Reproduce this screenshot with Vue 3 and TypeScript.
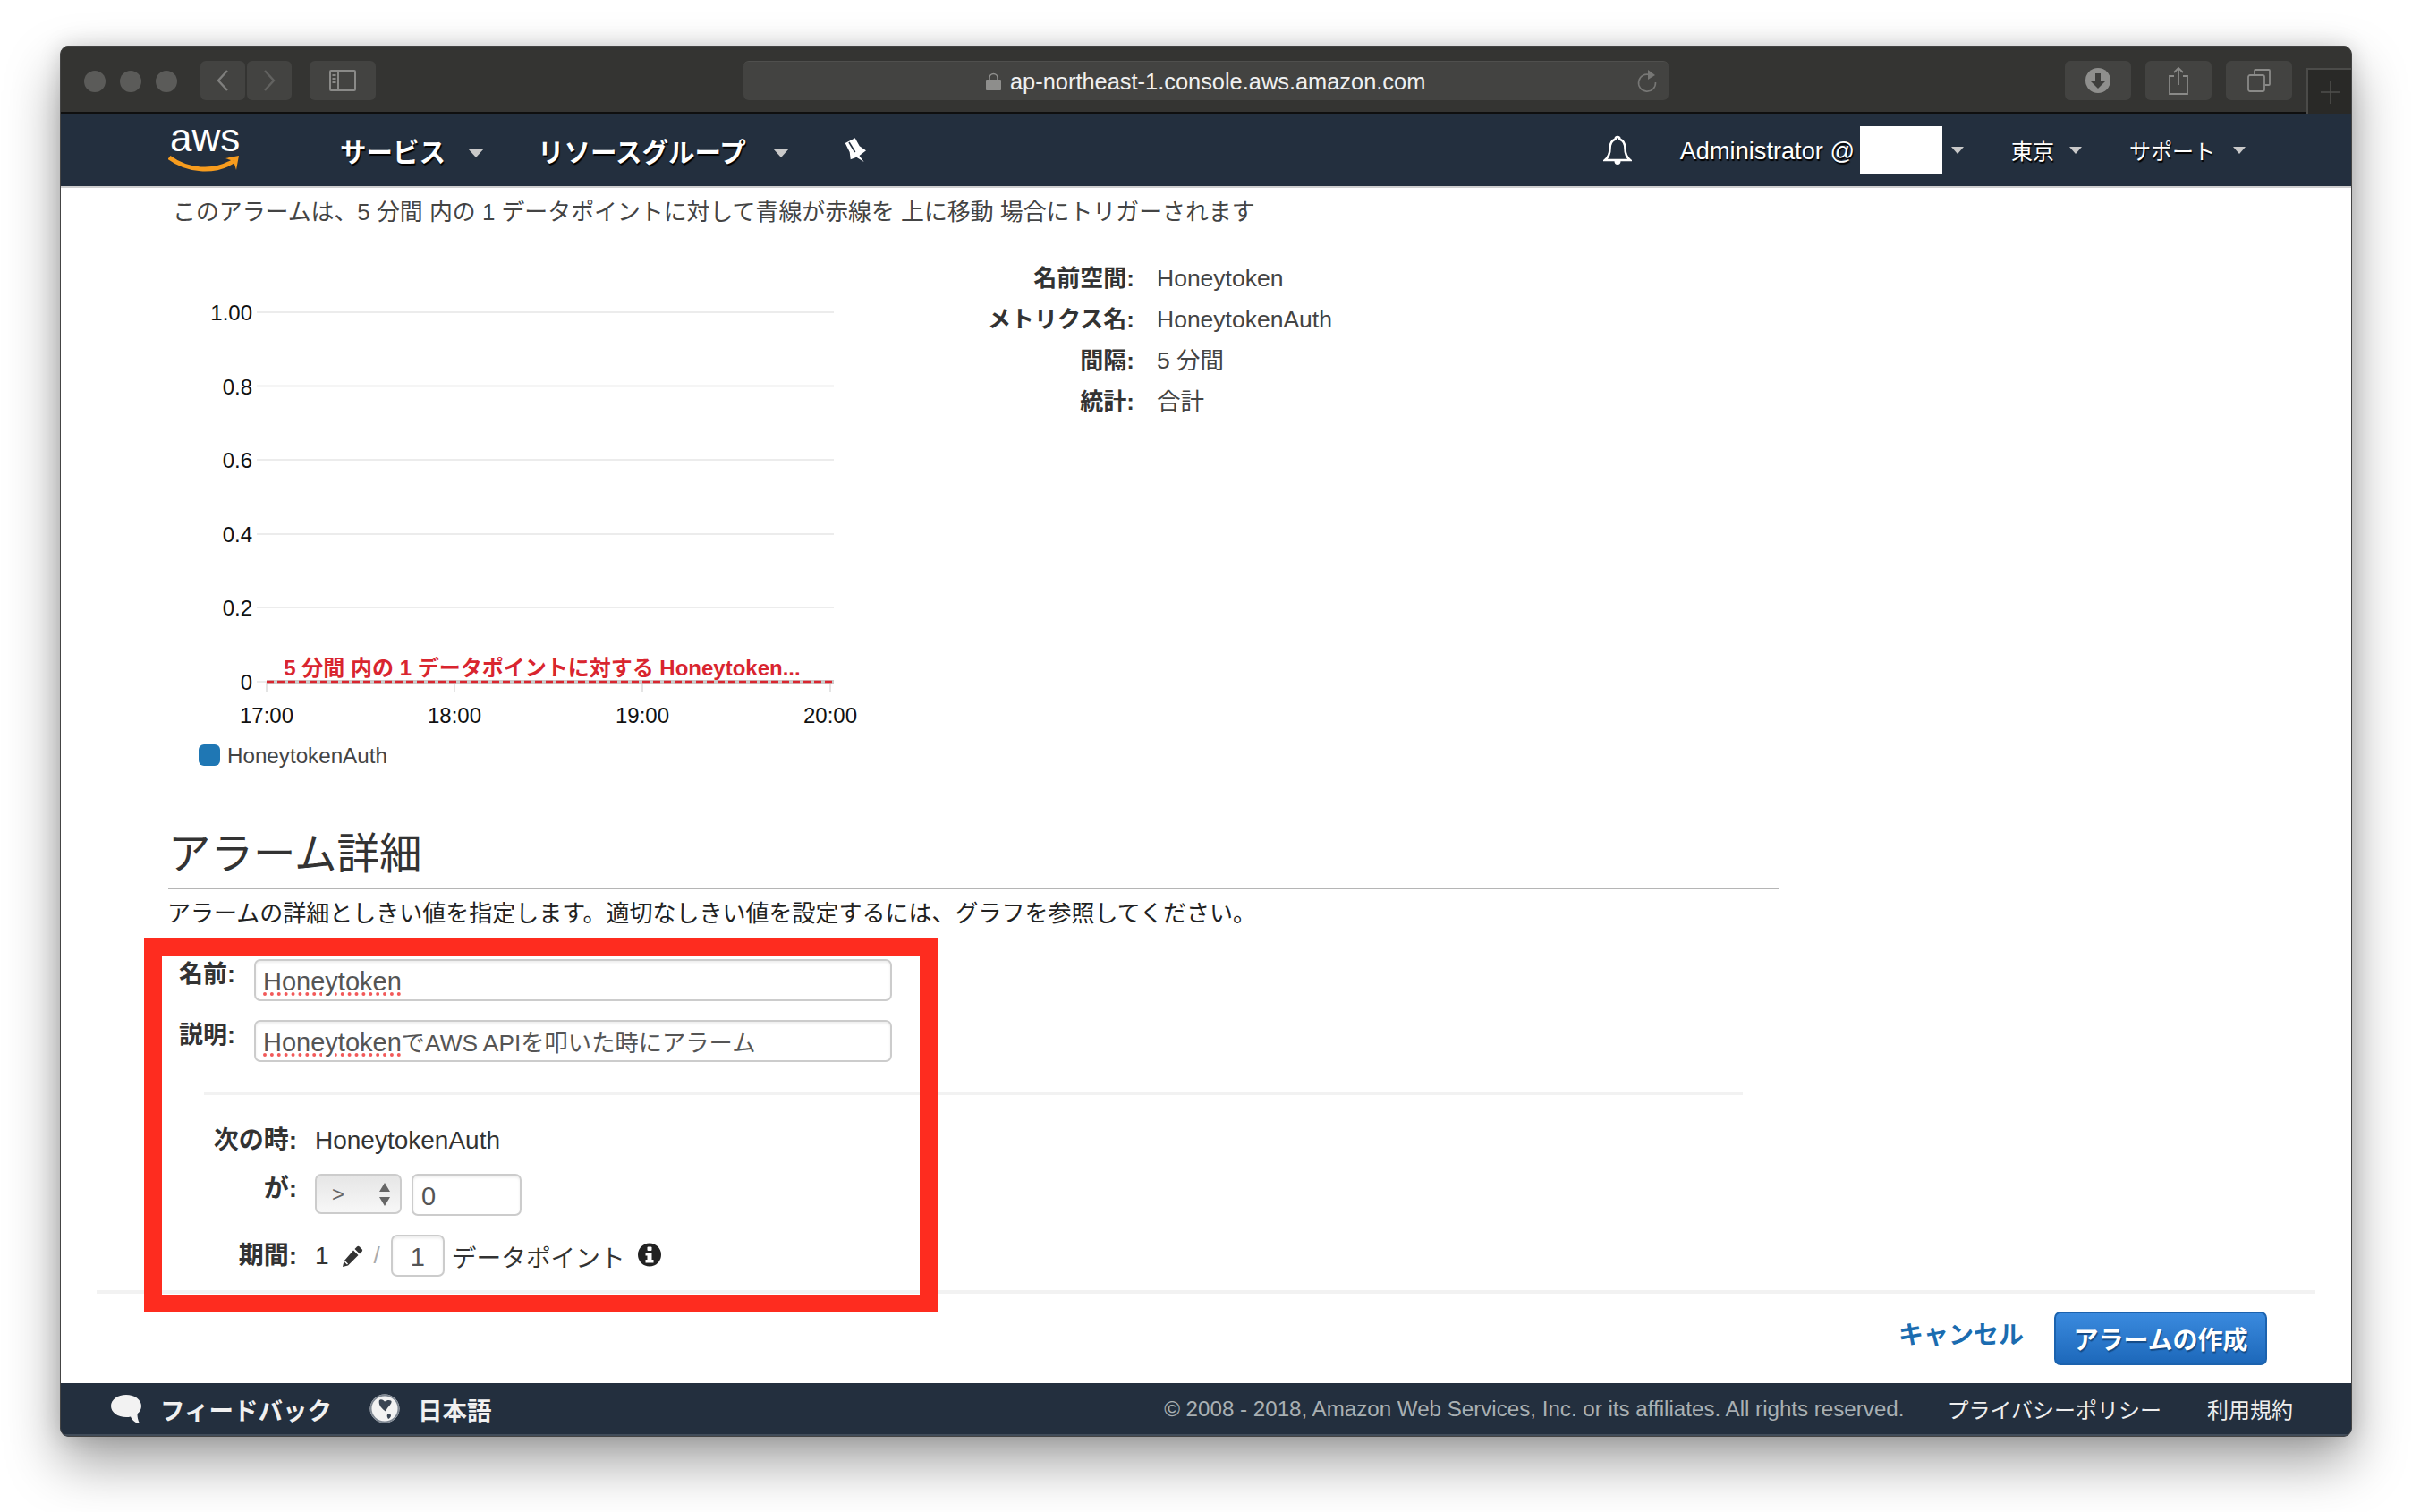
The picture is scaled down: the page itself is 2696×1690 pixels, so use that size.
<script setup lang="ts">
const yTicks = [
  { label: '1.00', y: 87 },
  { label: '0.8', y: 169.6 },
  { label: '0.6', y: 252 },
  { label: '0.4', y: 335 },
  { label: '0.2', y: 417 },
  { label: '0', y: 500 },
];
const xTicks = [
  { label: '17:00', x: 108 },
  { label: '18:00', x: 318 },
  { label: '19:00', x: 528 },
  { label: '20:00', x: 738 },
];
const meta = [
  ['名前空間:', 'Honeytoken'],
  ['メトリクス名:', 'HoneytokenAuth'],
  ['間隔:', '5 分間'],
  ['統計:', '合計'],
];
</script>

<template>
  <div class="stage">
    <div class="window">
      <div class="titlebar">
        <div class="lights"><i></i><i></i><i></i></div>
        <div class="tool nav-back">
          <svg width="16" height="26" viewBox="0 0 16 26"><path d="M13 2 3 13l10 11" fill="none" stroke="#7f7f7d" stroke-width="2.4" /></svg>
        </div>
        <div class="tool nav-forward">
          <svg width="16" height="26" viewBox="0 0 16 26"><path d="m3 2 10 11L3 24" fill="none" stroke="#626260" stroke-width="2.4" /></svg>
        </div>
        <div class="tool sidebar-btn">
          <svg width="30" height="24" viewBox="0 0 30 24">
            <rect x="1" y="1" width="28" height="22" rx="1" fill="none" stroke="#8a8a88" stroke-width="2" />
            <path d="M10 1v22" stroke="#8a8a88" stroke-width="2" />
            <path d="M3.5 6h4M3.5 10h4M3.5 14h4" stroke="#8a8a88" stroke-width="2" />
          </svg>
        </div>
        <div class="url">
          <svg class="lock" width="17" height="20" viewBox="0 0 17 20">
            <path d="M4 9V6a4.500 4.500 0 0 1 9 0v3" fill="none" stroke="#8e8e8c" stroke-width="1.600" />
            <rect y="8" width="17" height="12" rx="1" fill="#8e8e8c" />
          </svg>
          <span class="url-text">ap-northeast-1.console.aws.amazon.com</span>
          <svg class="reload" width="24" height="28" viewBox="0 0 24 28">
            <path d="M15 6.600A9.500 9.500 0 1 0 21.500 15" fill="none" stroke="#777775" stroke-width="1.600" />
            <path d="m13 1 8 6-8 5z" fill="#777775" />
          </svg>
        </div>
        <div class="tool download">
          <svg width="28" height="28" viewBox="0 0 28 28">
            <circle cx="14" cy="14" r="14" fill="#8f8f8d" />
            <path d="M11 6h6v9h5l-8 8-8-8h5z" fill="#3f3f3d" />
          </svg>
        </div>
        <div class="tool share">
          <svg width="24" height="32" viewBox="0 0 24 32">
            <path d="M7 11H2v20h20V11h-5" fill="none" stroke="#8a8a88" stroke-width="1.800" />
            <path d="M12 21V2M7 7l5-5 5 5" fill="none" stroke="#8a8a88" stroke-width="1.800" />
          </svg>
        </div>
        <div class="tool tabs">
          <svg width="26" height="26" viewBox="0 0 26 26">
            <path d="M8 6V2a1 1 0 0 1 1-1h15a1 1 0 0 1 1 1v15a1 1 0 0 1-1 1h-4" fill="none" stroke="#8a8a88" stroke-width="1.800" />
            <rect x="1" y="7" width="18" height="18" rx="2" fill="none" stroke="#8a8a88" stroke-width="1.800" />
          </svg>
        </div>
        <div class="newtab">
          <svg width="22" height="26" viewBox="0 0 22 26"><path d="M11 0v26M0 13h22" stroke="#4f4f4d" stroke-width="1.600" /></svg>
        </div>
      </div>

      <div class="topnav">
        <svg class="logo" width="82" height="66" viewBox="0 0 82 66">
          <text class="logo-text" x="2" y="40">aws</text>
          <path d="M1 47c20 15 50 18 72 4" fill="none" stroke="#f79c1e" stroke-width="5" />
          <path d="m64 48 15-3-3 16-3-10z" fill="#f79c1e" />
        </svg>
        <span class="nav-main services">サービス</span>
        <i class="caret c1"></i>
        <span class="nav-main groups">リソースグループ</span>
        <i class="caret c2"></i>
        <svg class="pin" width="28" height="30" viewBox="0 0 28 30">
          <path d="M1.700 7 12.700 1.300 17.700 10.300 25 15.300 17.500 21 22.700 28 14.300 22.700 7.700 25.300 6.700 17z" fill="#fff" />
          <path d="m6 6 6.700 11" stroke="#232f3e" stroke-width="1.600" />
        </svg>
        <svg class="bell" width="32" height="34" viewBox="0 0 32 34">
          <path d="M16 2c1.600 0 2.400 1 2.400 2.400C23 6 24.500 9.500 24.500 15c0 6 2 10 5.500 13H2c3.500-3 5.500-7 5.500-13 0-5.500 1.500-9 6.100-10.600C13.600 3 14.400 2 16 2Z" fill="none" stroke="#fff" stroke-width="2.600" />
          <path d="M12.500 29a3.500 4 0 0 0 7 0z" fill="#fff" />
        </svg>
        <span class="nav-sub admin">Administrator @</span>
        <span class="mask"></span>
        <i class="caret small c3"></i>
        <span class="nav-sub region">東京</span>
        <i class="caret small c4"></i>
        <span class="nav-sub support">サポート</span>
        <i class="caret small c5"></i>
      </div>

      <div class="content">
        <p class="summary">このアラームは、5 分間 内の 1 データポイントに対して青線が赤線を 上に移動 場合にトリガーされます</p>

        <div class="chart-row">
          <svg class="chart" width="810" height="618" viewBox="0 0 810 618">
            <g v-for="t in yTicks" :key="t.label">
              <line x1="97" x2="742" :y1="t.y" :y2="t.y" stroke="#ececec" stroke-width="2" />
              <text class="axis" x="92" :y="t.y + 9" text-anchor="end">{{ t.label }}</text>
            </g>
            <g v-for="t in xTicks" :key="t.label">
              <line :x1="t.x" :x2="t.x" y1="500" y2="511" stroke="#e4e4e4" stroke-width="2" />
              <text class="axis" :x="t.x" y="546" text-anchor="middle">{{ t.label }}</text>
            </g>
            <line x1="108" x2="742" y1="500" y2="500" stroke="#cccccc" stroke-width="4" />
            <line x1="108" x2="742" y1="500" y2="500" stroke="#d9252f" stroke-width="2.500" stroke-dasharray="8 4" />
            <text class="threshold" x="416" y="493" text-anchor="middle">5 分間 内の 1 データポイントに対する Honeytoken...</text>
            <rect x="32" y="570" width="24" height="24" rx="6" fill="#1f77b4" />
            <text class="legend" x="64" y="591">HoneytokenAuth</text>
          </svg>
          <div class="meta">
            <template v-for="m in meta" :key="m[0]">
              <span class="meta-key">{{ m[0] }}</span>
              <span class="meta-value">{{ m[1] }}</span>
            </template>
          </div>
        </div>

        <h2 class="section-title">アラーム詳細</h2>
        <p class="section-desc">アラームの詳細としきい値を指定します。適切なしきい値を設定するには、グラフを参照してください。</p>

        <div class="form">
          <div class="field first">
            <label class="field-label">名前:</label>
            <div class="text-input wide"><span class="misspelt">Honeytoken</span></div>
          </div>
          <div class="field">
            <label class="field-label">説明:</label>
            <div class="text-input wide"><span class="misspelt">Honeytoken</span>でAWS APIを叩いた時にアラーム</div>
          </div>
        </div>
        <div class="divider inner"></div>

        <div class="condition first-cond">
          <label class="cond-label">次の時:</label>
          <span class="cond-value">HoneytokenAuth</span>
        </div>
        <div class="condition second-cond">
          <label class="cond-label ga">が:</label>
          <div class="select">
            <span>&gt;</span>
            <svg width="14" height="26" viewBox="0 0 14 26"><path d="M7 0 13 10H1zM7 26 1 16h12z" fill="#666" /></svg>
          </div>
          <div class="text-input num">0</div>
        </div>
        <div class="condition third-cond">
          <label class="cond-label">期間:</label>
          <span class="cond-value one">1</span>
          <svg class="pencil" width="24" height="24" viewBox="0 0 24 24">
            <path d="M17 1.500a2 2 0 0 1 2.800 0l2.700 2.700a2 2 0 0 1 0 2.800L20 9.500 14.500 4z" fill="#333" />
            <path d="M13 5.500 18.500 11 7 22.500 1 24l1.500-6.500z" fill="#333" />
            <path d="m3.500 18 3 3" stroke="#fff" stroke-width="1.500" />
          </svg>
          <span class="slash">/</span>
          <div class="text-input period">1</div>
          <span class="datapoint">データポイント</span>
          <svg class="info" width="26" height="27" viewBox="0 0 26 27">
            <circle cx="13" cy="13.500" r="13" fill="#222" />
            <rect x="10.500" y="4.500" width="5" height="4.500" rx="1" fill="#fff" />
            <path d="M8.500 11h7v8h2v3.500h-9V19h2v-4.500h-2z" fill="#fff" />
          </svg>
        </div>
        <div class="divider outer"></div>

        <div class="actions">
          <a class="cancel">キャンセル</a>
          <button class="create">アラームの作成</button>
        </div>
      </div>

      <div class="footer">
        <svg class="bubble" width="34" height="32" viewBox="0 0 34 32">
          <path d="M17 0c9.400 0 17 5.400 17 12.500 0 3.600-1.800 6.500-4.500 8.800 0 3.500.5 7 2.500 10.700-4.500-.5-8-3-10-7.600-1.600.3-3.300.6-5 .6C7.600 25 0 19.600 0 12.500S7.600 0 17 0Z" fill="#f2f2f2" />
        </svg>
        <span class="foot-strong feedback">フィードバック</span>
        <svg class="globe" width="34" height="33" viewBox="0 0 34 33">
          <ellipse cx="17" cy="16.500" rx="16.500" ry="16" fill="#f2f2f2" />
          <path d="M11 7c2-1.500 4-.5 6 1.500 2-1.500 5-2 7-1 1.500 1 0 4-2 6-2 2-3 4-4 6-2-1-3.500-3-5-4.500S10 9.500 11 7Z" fill="#3a4553" />
          <path d="M20 23c1.500-1 4-.5 4 1s-1.500 3.500-3 4c-1-1.500-1.800-3.500-1-5Z" fill="#3a4553" />
          <ellipse cx="17" cy="16.500" rx="15.500" ry="15" fill="none" stroke="#7d8691" stroke-width="2" />
        </svg>
        <span class="foot-strong lang">日本語</span>
        <span class="copyright">© 2008 - 2018, Amazon Web Services, Inc. or its affiliates. All rights reserved.</span>
        <a class="foot-link privacy">プライバシーポリシー</a>
        <a class="foot-link terms">利用規約</a>
      </div>
    </div>
    <div class="annotation"></div>
  </div>
</template>

<style>
html,
body {
  margin: 0;
  background: #fff;
}
</style>

<style scoped>
* {
  box-sizing: border-box;
}

.stage {
  position: relative;
  width: 2696px;
  height: 1690px;
  padding: 51px 0 0 67px;
  overflow: hidden;
  background: #fff;
  font-family: "Liberation Sans", "Noto Sans CJK JP", sans-serif;
  color: #222;
}

.window {
  position: relative;
  display: flex;
  flex-direction: column;
  width: 2562px;
  height: 1555px;
  border-radius: 10px;
  overflow: hidden;
  background: #fff;
  box-shadow: 0 28px 60px rgba(0, 0, 0, 0.38), 0 0 24px rgba(0, 0, 0, 0.14);
}

.window::after {
  content: "";
  position: absolute;
  inset: 0;
  border: 1px solid #444;
  border-radius: 10px;
  pointer-events: none;
}

/* title bar */
.titlebar {
  display: flex;
  align-items: flex-start;
  flex: none;
  height: 76px;
  padding-top: 17px;
  background: #343432;
  border-top: 2px solid #4b4b49;
  border-bottom: 2px solid #0f0f0f;
}

.lights {
  display: flex;
  gap: 16px;
  margin: 9px 0 0 27px;
}

.lights i {
  display: block;
  width: 24px;
  height: 24px;
  border-radius: 50%;
  background: #5b5b59;
}

.tool {
  display: flex;
  align-items: center;
  justify-content: center;
  height: 44px;
  margin-top: -2px;
  border-radius: 6px;
  background: #434341;
}

.nav-back {
  width: 50px;
  margin-left: 26px;
}

.nav-forward {
  width: 50px;
  margin-left: 2px;
}

.sidebar-btn {
  width: 74px;
  margin-left: 20px;
}

.url {
  display: flex;
  align-items: center;
  width: 1034px;
  height: 44px;
  margin: -2px 0 0 411px;
  padding-left: 271px;
  border-radius: 6px;
  background: #434341;
  border-top: 1px solid #4f4f4d;
  color: #f0f0f0;
  font-size: 25.4px;
}

.url-text {
  margin-top: 2px;
}

.lock {
  margin-right: 10px;
}

.reload {
  margin-left: auto;
  margin-right: 12px;
}

.download {
  width: 74px;
  margin-left: 443px;
}

.share {
  width: 74px;
  margin-left: 16px;
}

.tabs {
  width: 74px;
  margin-left: 16px;
}

.newtab {
  display: flex;
  align-items: center;
  justify-content: center;
  width: 51px;
  height: 51px;
  margin: 6px 0 0 16px;
  background: #292927;
  border-left: 2px solid #4b4b49;
  border-top: 2px solid #4b4b49;
}

/* aws bar */
.topnav {
  display: flex;
  align-items: center;
  flex: none;
  height: 83px;
  padding-left: 121px;
  background: #232f3e;
  border-bottom: 2px solid #cfcfcf;
  color: #fff;
}

.logo {
  flex: none;
  margin-top: -11px;
}

.logo-text {
  font-family: "Liberation Sans", sans-serif;
  font-size: 44px;
  fill: #fff;
}

.nav-main {
  font-size: 29.5px;
  font-weight: 700;
  white-space: nowrap;
  text-shadow: 1px 2px 1px #000;
}

.nav-sub {
  font-size: 24px;
  white-space: nowrap;
  text-shadow: 1px 2px 1px #000;
}

.services {
  margin-left: 110px;
}

.groups {
  margin-left: 60px;
}

.caret {
  display: block;
  flex: none;
  width: 0;
  height: 0;
  border-left: 9px solid transparent;
  border-right: 9px solid transparent;
  border-top: 10px solid #c9c9c9;
  margin-top: 6px;
}

.caret.small {
  border-left-width: 7.5px;
  border-right-width: 7.5px;
  border-top-width: 8px;
  margin-top: 1px;
}

.c1 {
  margin-left: 25px;
}

.c2 {
  margin-left: 30px;
}

.pin {
  margin-left: 61px;
}

.bell {
  margin-left: auto;
}

.admin {
  margin-left: 54px;
  margin-top: 2px;
  font-size: 27.2px;
}

.mask {
  display: block;
  flex: none;
  width: 92px;
  height: 53px;
  margin-left: 6px;
  background: #fff;
}

.c3 {
  margin-left: 10px;
}

.region {
  margin-left: 53px;
}

.c4 {
  margin-left: 17px;
}

.support {
  margin-left: 53px;
}

.c5 {
  margin-left: 20px;
  margin-right: 119px;
}

/* page body */
.content {
  flex: 1;
  min-height: 0;
  display: flex;
  flex-direction: column;
}

.summary {
  margin: 0;
  padding: 1px 0 0 126px;
  height: 52px;
  line-height: 52px;
  font-size: 25.9px;
  color: #444;
}

.chart-row {
  display: flex;
  align-items: flex-start;
  flex: none;
  padding-left: 123px;
}

.chart {
  flex: none;
}

.axis {
  font-size: 24px;
  fill: #111;
}

.threshold {
  font-size: 24px;
  font-weight: 700;
  fill: #d9252f;
}

.legend {
  font-size: 24.2px;
  fill: #444;
}

.meta {
  display: grid;
  grid-template-columns: 202px auto;
  column-gap: 25px;
  grid-auto-rows: 46px;
  align-items: center;
  margin: 26px 0 0 66px;
  font-size: 26px;
  line-height: 30px;
}

.meta-key {
  height: 30px;
  text-align: right;
  font-weight: 700;
  white-space: nowrap;
  color: #333;
}

.meta-value {
  height: 30px;
  font-size: 26.5px;
  color: #444;
}

.section-title {
  margin: 45px 0 0 121px;
  width: 1800px;
  padding-bottom: 7px;
  border-bottom: 2px solid #b5b5b5;
  line-height: 60px;
  font-size: 47.5px;
  font-weight: 400;
  color: #333;
}

.section-desc {
  margin: 7px 0 0 120px;
  height: 39px;
  line-height: 40px;
  font-size: 26px;
  color: #222;
}

.form {
  display: flex;
  flex-direction: column;
  gap: 21px;
  margin-top: 32px;
}

.field {
  display: flex;
  gap: 21px;
}

.field-label {
  width: 196px;
  height: 36px;
  text-align: right;
  line-height: 34px;
  font-size: 27px;
  font-weight: 700;
  color: #333;
}

.text-input {
  border: 2px solid #ccc;
  border-radius: 7px;
  background: #fff;
  box-shadow: inset 0 2px 3px rgba(0, 0, 0, 0.07);
  color: #555;
  font-size: 29px;
}

.wide {
  width: 713px;
  height: 47px;
  padding-left: 8px;
  line-height: 46px;
  font-size: 26.3px;
}

.misspelt {
  font-size: 29px;
  text-decoration: underline dotted #f25a5a 4px;
  text-underline-offset: 2px;
}

.divider {
  flex: none;
  height: 4px;
  background: #f2f2f2;
}

.divider.inner {
  width: 1720px;
  margin: 33px 0 0 161px;
}

.divider.outer {
  width: 2480px;
  margin: 15px 0 0 41px;
}

.condition {
  display: flex;
  align-items: center;
  flex: none;
}

.first-cond {
  height: 40px;
  margin-top: 30px;
}

.second-cond {
  align-items: flex-start;
  margin-top: 18px;
}

.third-cond {
  height: 47px;
  margin-top: 21px;
}

.cond-label {
  width: 265px;
  height: 36px;
  text-align: right;
  margin-right: 20px;
  line-height: 36px;
  font-size: 28px;
  font-weight: 700;
  color: #333;
}

.first-cond .cond-label,
.first-cond .cond-value {
  margin-top: 2px;
}

.ga {
  height: 32px;
  line-height: 34px;
}

.cond-value {
  font-size: 28px;
  color: #333;
}

.select {
  display: flex;
  align-items: center;
  justify-content: space-between;
  width: 97px;
  height: 45px;
  padding: 0 10px 0 17px;
  border: 2px solid #ccc;
  border-radius: 7px;
  background: linear-gradient(#e6e6e6, #f7f7f7);
  font-size: 24px;
  color: #666;
}

.num {
  width: 123px;
  height: 47px;
  margin-left: 11px;
  padding-left: 9px;
  line-height: 46px;
}

.one {
  margin-left: 0;
}

.pencil {
  margin-left: 14px;
}

.slash {
  margin-left: 12px;
  font-size: 26px;
  color: #aaa;
}

.period {
  width: 60px;
  height: 47px;
  margin-left: 12px;
  line-height: 46px;
  text-align: center;
}

.datapoint {
  margin-left: 8px;
  font-size: 27.7px;
  color: #333;
}

.info {
  margin: -2px 0 0 14px;
}

.actions {
  display: flex;
  align-items: center;
  justify-content: flex-end;
  gap: 34px;
  flex: none;
  margin-top: 20px;
  padding-right: 95px;
}

.cancel {
  margin-top: -12px;
  font-size: 28px;
  font-weight: 700;
  color: #1b6cb0;
  white-space: nowrap;
}

.create {
  width: 238px;
  height: 60px;
  padding: 0;
  border: 2px solid #1b62ae;
  border-radius: 7px;
  background: linear-gradient(#3a8ade, #1d68ba);
  color: #fff;
  font-family: inherit;
  font-size: 28px;
  font-weight: 700;
  text-shadow: 1px 2px 1px #144a85;
}

/* footer */
.footer {
  display: flex;
  align-items: center;
  flex: none;
  height: 60px;
  padding: 0 66px 0 57px;
  background: #232f3e;
  border-bottom: 3px solid #414c59;
}

.foot-strong {
  font-size: 27.5px;
  font-weight: 700;
  color: #f0f0f0;
  white-space: nowrap;
}

.feedback {
  margin-left: 21px;
}

.globe {
  margin-left: 42px;
}

.lang {
  margin-left: 20px;
}

.copyright {
  margin-left: auto;
  font-size: 24.15px;
  color: #a9b0b3;
  white-space: nowrap;
}

.foot-link {
  font-size: 24px;
  color: #eee;
  white-space: nowrap;
}

.privacy {
  margin-left: 48px;
}

.terms {
  margin-left: 51px;
}

/* red box drawn over the screenshot */
.annotation {
  position: absolute;
  left: 161px;
  top: 1048px;
  width: 887px;
  height: 419px;
  border: 20px solid #fe2c1f;
}
</style>
